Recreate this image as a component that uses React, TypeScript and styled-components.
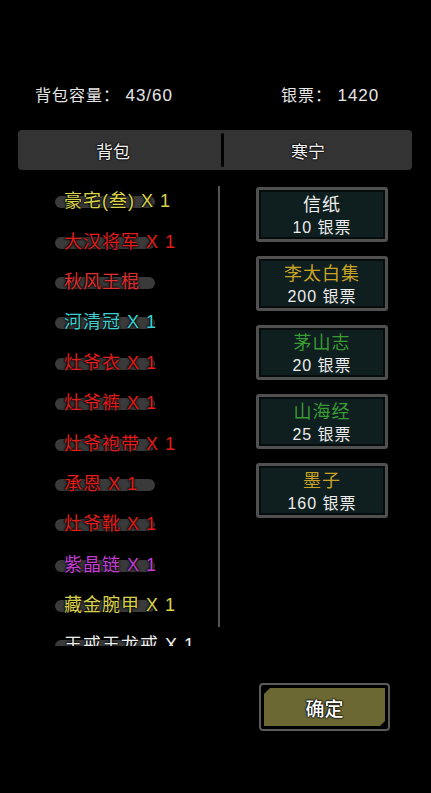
import React from "react";
import styled, { createGlobalStyle } from "styled-components";

const GlobalStyle = createGlobalStyle`
  html, body {
    margin: 0;
    padding: 0;
    background: #000;
  }
  body {
    font-family: "Liberation Sans", "Noto Sans CJK SC", sans-serif;
  }
`;

const Screen = styled.div`
  width: 431px;
  height: 793px;
  background: #000;
  display: flex;
  flex-direction: column;
  overflow: hidden;
`;

const InfoRow = styled.div`
  display: grid;
  grid-template-columns: 246px 1fr;
  padding: 84px 0 0 35px;
  color: #e6e6e6;
  font-size: 16px;
  line-height: 24px;
  letter-spacing: 1px;
`;

const InfoValue = styled.span`
  font-size: 17px;
`;

const Tabs = styled.div`
  margin: 22px 19px 0 18px;
  height: 40px;
  background: #333;
  border-radius: 4px;
  display: flex;
  align-items: center;
`;

const Tab = styled.div<{ $width: number }>`
  flex: 0 0 ${(p) => p.$width}px;
  text-align: center;
  color: #f2f2f2;
  font-size: 17px;
  text-shadow: 0 0 2px #000, 0 0 2px #000, 0 0 1px #000;
`;

const TabDivider = styled.div`
  width: 3px;
  height: 34px;
  margin-left: 13px;
  background: #000;
  border-radius: 2px;
`;

const Body = styled.div`
  display: flex;
  padding: 11px 0 0 18px;
`;

const List = styled.div`
  width: 200px;
  height: 465px;
  overflow: hidden;
  display: flex;
  flex-direction: column;
`;

const Row = styled.div`
  flex: 0 0 40.4px;
  display: grid;
  align-items: center;
  padding-left: 37px;
`;

const Pill = styled.div`
  grid-area: 1 / 1;
  width: 100px;
  height: 12px;
  margin-top: 2px;
  border-radius: 6px;
  background: #3a3a3a;
`;

const ItemText = styled.span<{ $color: string }>`
  grid-area: 1 / 1;
  padding-left: 9px;
  font-size: 18px;
  line-height: 24px;
  letter-spacing: 1px;
  white-space: nowrap;
  color: ${(p) => p.$color};
  text-shadow: 0 0 2px #000, 0 0 2px #000, 0 0 3px #000;
`;

const ScrollLine = styled.div`
  width: 2px;
  height: 441px;
  margin-top: 5px;
  background: #555;
`;

const Shop = styled.div`
  display: flex;
  flex-direction: column;
  gap: 14px;
  margin: 6px 0 0 36px;
`;

const Card = styled.div`
  box-sizing: border-box;
  width: 132px;
  height: 55px;
  padding-top: 3px;
  border: 3px solid #505050;
  border-radius: 3px;
  background: #0f1e1e;
  box-shadow: inset 0 0 0 2px #060c0c;
  display: flex;
  flex-direction: column;
  align-items: center;
  justify-content: center;
  letter-spacing: 1px;
`;

const CardTitle = styled.div<{ $color: string }>`
  font-size: 18px;
  line-height: 23px;
  color: ${(p) => p.$color};
`;

const CardPrice = styled.div`
  font-size: 16px;
  line-height: 21px;
  color: #ececec;
`;

const Footer = styled.div`
  display: flex;
  padding: 37px 0 0 259px;
`;

const ConfirmButton = styled.button`
  width: 131px;
  height: 48px;
  padding: 3px;
  border: 2px solid #5a5a5a;
  border-radius: 4px;
  background: #000;
  cursor: pointer;
`;

const ConfirmFace = styled.div`
  height: 100%;
  background: #6b6833;
  clip-path: polygon(6px 0, 100% 0, 100% calc(100% - 5px), calc(100% - 5px) 100%, 0 100%, 0 6px);
  display: flex;
  align-items: center;
  justify-content: center;
  color: #fff;
  font-family: "Noto Sans CJK SC", sans-serif;
  font-size: 19px;
  font-weight: 500;
  text-shadow: 0 0 2px #000, 0 0 2px #000, 0 0 1px #000, 0 0 1px #000;
`;

const items = [
  { name: "豪宅(叁) X 1", color: "#d8d24a" },
  { name: "大汉将军 X 1", color: "#e01c1c" },
  { name: "秋风王棍", color: "#e03030" },
  { name: "河清冠 X 1", color: "#3ed0d0" },
  { name: "灶爷衣 X 1", color: "#e01c1c" },
  { name: "灶爷裤 X 1", color: "#e01c1c" },
  { name: "灶爷袍带 X 1", color: "#e01c1c" },
  { name: "承恩 X 1", color: "#e01c1c" },
  { name: "灶爷靴 X 1", color: "#e01c1c" },
  { name: "紫晶链 X 1", color: "#c23ed2" },
  { name: "藏金腕甲 X 1", color: "#d8d24a" },
  { name: "王戒王龙戒 X 1", color: "#f0f0f0" },
];

const goods = [
  { name: "信纸", price: 10, color: "#f0f0f0" },
  { name: "李太白集", price: 200, color: "#c9a326" },
  { name: "茅山志", price: 20, color: "#3a9a34" },
  { name: "山海经", price: 25, color: "#3a9a34" },
  { name: "墨子", price: 160, color: "#c9a326" },
];

export default function App() {
  return (
    <Screen>
      <GlobalStyle />
      <InfoRow>
        <span>
          背包容量： <InfoValue>43/60</InfoValue>
        </span>
        <span>
          银票： <InfoValue>1420</InfoValue>
        </span>
      </InfoRow>

      <Tabs>
        <Tab $width={190}>背包</Tab>
        <TabDivider />
        <Tab $width={168}>寒宁</Tab>
      </Tabs>

      <Body>
        <List>
          {items.map((item, i) => (
            <Row key={i}>
              <Pill />
              <ItemText $color={item.color}>{item.name}</ItemText>
            </Row>
          ))}
        </List>
        <ScrollLine />
        <Shop>
          {goods.map((g) => (
            <Card key={g.name}>
              <CardTitle $color={g.color}>{g.name}</CardTitle>
              <CardPrice>{g.price} 银票</CardPrice>
            </Card>
          ))}
        </Shop>
      </Body>

      <Footer>
        <ConfirmButton>
          <ConfirmFace>确定</ConfirmFace>
        </ConfirmButton>
      </Footer>
    </Screen>
  );
}
